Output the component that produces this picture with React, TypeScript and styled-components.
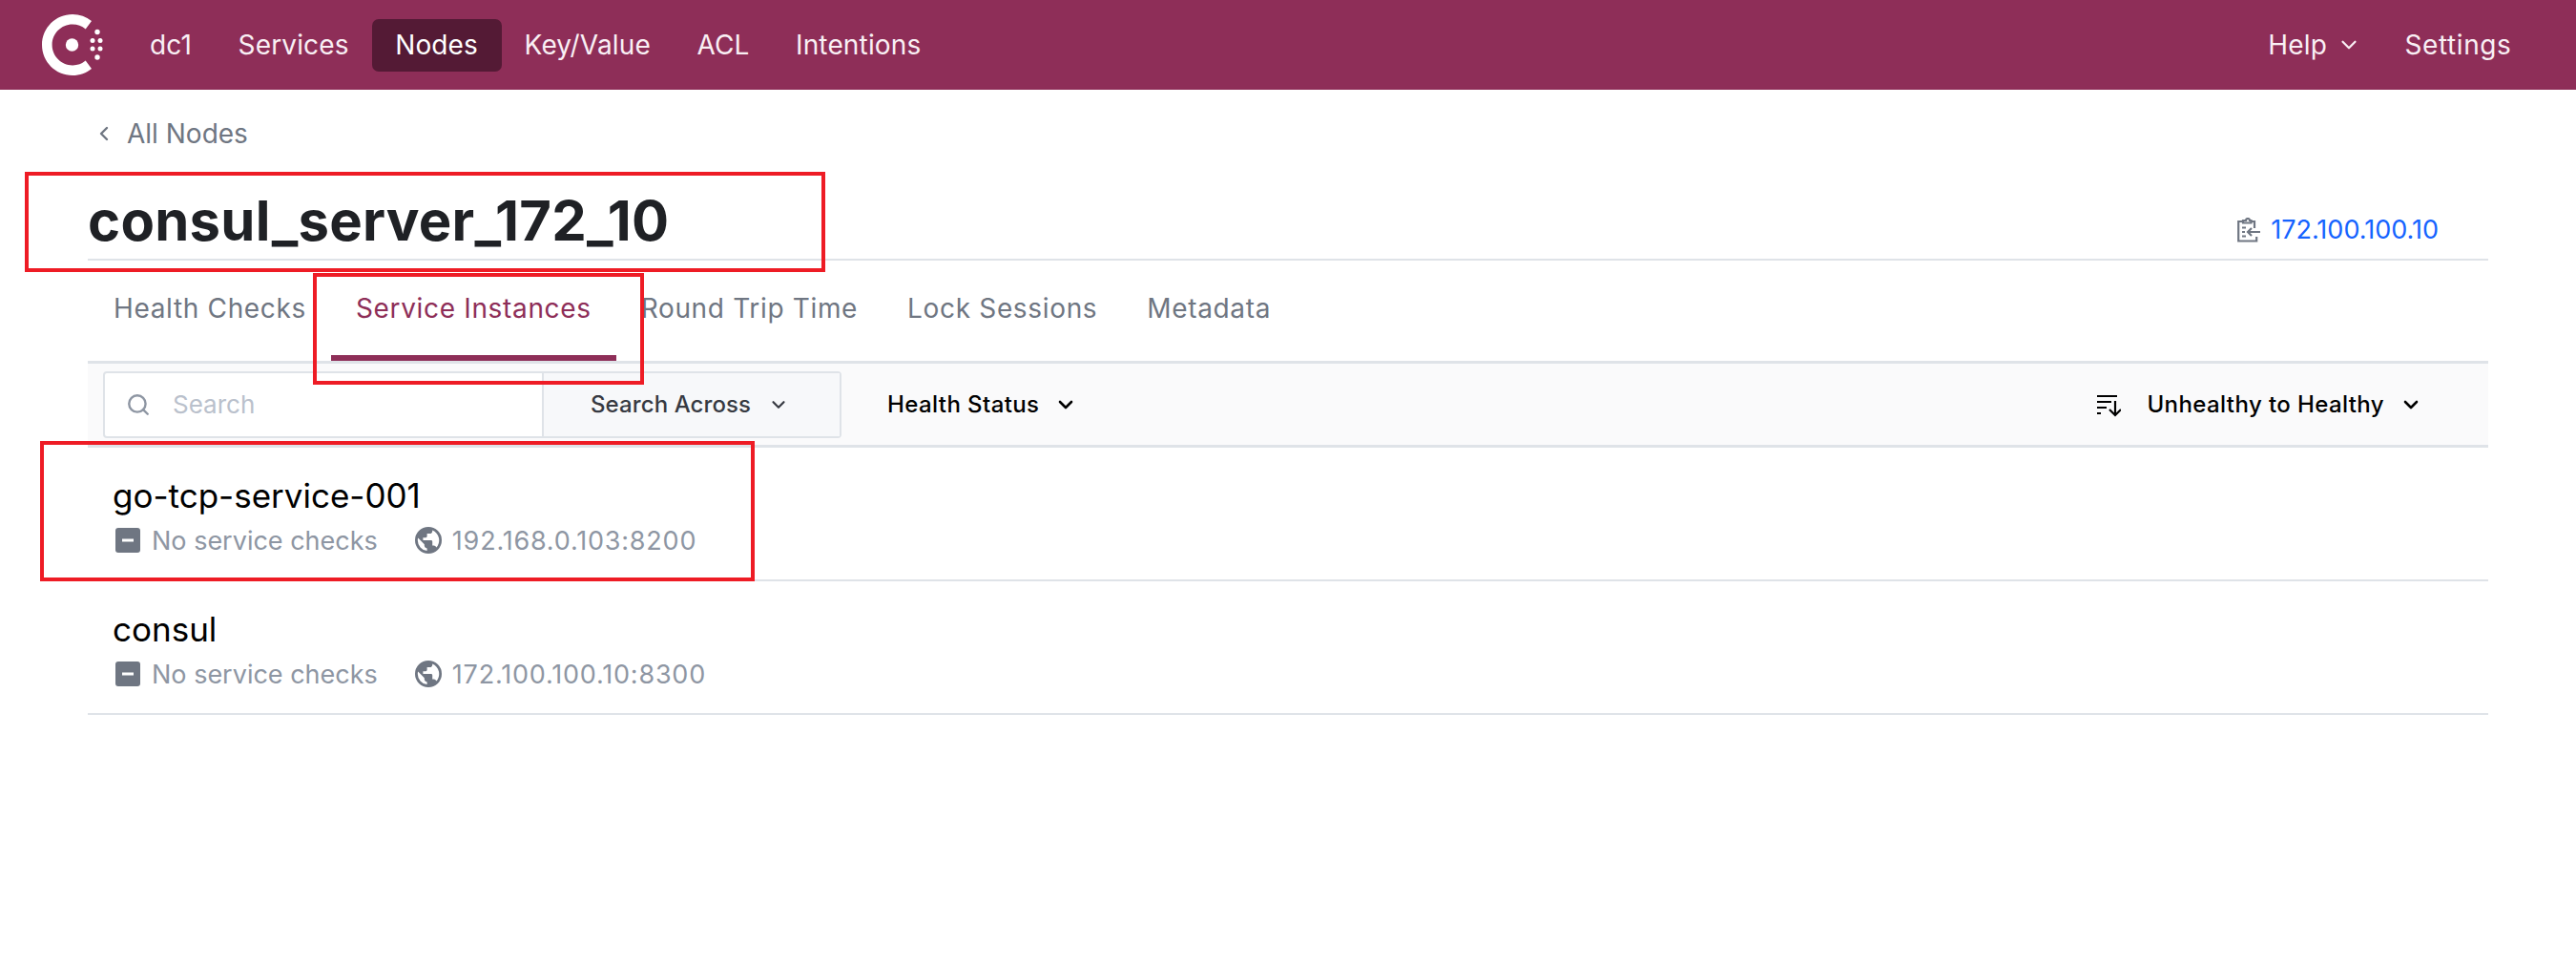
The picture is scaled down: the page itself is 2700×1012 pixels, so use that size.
import React from "react";
import styled, { createGlobalStyle } from "styled-components";
import { ChevronDown, ChevronLeft, Search as SearchGlyph } from "lucide-react";

const Global = createGlobalStyle`
  html, body { margin: 0; padding: 0; background: #fff; }
  body { font-family: Inter, "Liberation Sans", sans-serif; -webkit-font-smoothing: antialiased; }
  * { box-sizing: border-box; }
`;

const Page = styled.div`
  position: relative;
  width: 2700px;
  height: 1012px;
  overflow: hidden;
`;

const TopBar = styled.header`
  height: 94px;
  background: #8e2e58;
  display: flex;
  align-items: center;
  justify-content: space-between;
  padding: 0 43px 0 44px;
`;
const NavGroup = styled.nav`
  display: flex;
  align-items: center;
`;
const LogoMark = styled.svg`
  width: 64px;
  height: 64px;
  margin-right: 25px;
  display: block;
`;
const NavItem = styled.a<{ $active?: boolean; $spread?: number }>`
  height: 55px;
  padding: 0 24.5px 0 24px;
  display: flex;
  align-items: center;
  gap: 10px;
  border-radius: 7px;
  font-size: 28px;
  letter-spacing: ${p => p.$spread ?? 0.15}px;
  color: ${p => (p.$active ? "#fff" : "#f9eff4")};
  background: ${p => (p.$active ? "#541a35" : "transparent")};
`;
const MenuChevron = styled(ChevronDown)`
  margin-right: -3px;
`;

const Main = styled.main`
  padding: 0 92px;
`;
const Crumb = styled.div`
  height: 92px;
  display: flex;
  align-items: center;
  gap: 12px;
  font-size: 28px;
  color: #6f7682;
  padding: 0 0 0 5px;
`;
const TitleRow = styled.div`
  height: 87px;
  display: flex;
  align-items: flex-start;
  justify-content: space-between;
  border-bottom: 2px solid #dfe3e8;
`;
const Title = styled.h1`
  margin: 0;
  font-size: 58px;
  line-height: 60px;
  font-weight: 700;
  letter-spacing: 0.25px;
  color: #1f2125;
  margin-top: 15px;
`;
const Address = styled.div`
  display: flex;
  align-items: center;
  gap: 10px;
  font-size: 27px;
  color: #1563ff;
  padding: 38px 52px 0 0;
`;

const Tabs = styled.div`
  height: 108px;
  display: flex;
  padding-left: 1px;
  border-bottom: 3px solid #dfe3e8;
`;
const Tab = styled.a<{ $active?: boolean }>`
  height: 105px;
  padding: 0 26px 0;
  display: flex;
  align-items: center;
  font-size: 28px;
  letter-spacing: 0.66px;
  color: ${p => (p.$active ? "#8e2e58" : "#6f7682")};
  border-bottom: ${p => (p.$active ? "6px solid #8e2e58" : "6px solid transparent")};
`;

const Toolbar = styled.div`
  height: 88px;
  background: #fafafb;
  border-bottom: 3px solid #dfe3e8;
  display: flex;
  align-items: center;
  justify-content: space-between;
  padding: 0 69px 0 16px;
`;
const ToolGroup = styled.div`
  display: flex;
  align-items: center;
`;
const SearchBox = styled.div`
  width: 774px;
  height: 70px;
  border: 2px solid #dfe3e8;
  border-radius: 4px;
  display: flex;
  background: #fff;
  margin-right: 48px;
`;
const SearchField = styled.div`
  width: 460px;
  display: flex;
  align-items: center;
  gap: 23px;
  padding-left: 22px;
  font-size: 26px;
  color: #bac1cc;
  border-right: 2px solid #dfe3e8;
`;
const SearchScope = styled.div`
  flex: 1;
  background: #f7f8fa;
  display: flex;
  align-items: center;
  gap: 18px;
  padding-left: 49px;
  font-size: 24px;
  font-weight: 500;
  letter-spacing: 0.1px;
  color: #373a42;
`;
const FilterLabel = styled.div`
  display: flex;
  align-items: center;
  gap: 16px;
  font-size: 24px;
  font-weight: 500;
  letter-spacing: 0.4px;
  color: #000;
`;
const SortIcon = styled.svg`
  width: 26px;
  height: 26px;
  margin-right: 27px;
`;

const Row = styled.div`
  height: 140px;
  border-bottom: 2px solid #dfe3e8;
  padding: 28px 0 0 26px;
`;
const RowTitle = styled.div`
  font-size: 35px;
  line-height: 44px;
  color: #000;
`;
const RowMeta = styled.div`
  display: flex;
  align-items: center;
  height: 40px;
  margin-top: 5px;
  padding-left: 3px;
  font-size: 27px;
  color: #8e96a3;
`;
const MetaIcon = styled.svg<{ $gap: number; $after: number }>`
  width: ${p => p.$gap}px;
  height: ${p => p.$gap}px;
  margin-right: ${p => p.$after}px;
  flex: none;
`;
const MetaText = styled.span`
  margin-right: 39px;
`;
const MetaAddress = styled.span`
  letter-spacing: 0.8px;
`;

const Callout = styled.div<{ $x: number; $y: number; $w: number; $h: number }>`
  position: absolute;
  left: ${p => p.$x}px;
  top: ${p => p.$y}px;
  width: ${p => p.$w}px;
  height: ${p => p.$h}px;
  border: 4px solid #ee1c25;
`;

const Logo = () => (
  <LogoMark viewBox="0 0 64 64">
    <path
      d="M32 0C14.3 0 0 14.3 0 32s14.3 32 32 32c7.6 0 14.6-2.6 20-7.1l-6.3-8.4A21 21 0 0 1 32 53.4C20.2 53.4 10.6 43.8 10.6 32S20.2 10.6 32 10.6c5.2 0 9.9 1.9 13.7 4.9L52 7.100A31.700 31.700 0 0 0 32 0z"
      fill="#fff"
    />
    <circle cx="31.500" cy="32" r="6.700" fill="#fff" />
    <circle cx="58" cy="18.500" r="2.700" fill="#fff" />
    <circle cx="53" cy="27.500" r="2.500" fill="#fff" />
    <circle cx="61" cy="27.500" r="2.500" fill="#fff" />
    <circle cx="53" cy="36" r="2.500" fill="#fff" />
    <circle cx="61" cy="36" r="2.500" fill="#fff" />
    <circle cx="58" cy="45" r="2.700" fill="#fff" />
  </LogoMark>
);

const ClipboardIcon = () => (
  <svg width="26" height="26" viewBox="0 0 26 26" fill="none" stroke="#6f7682" strokeWidth="2.200">
    <path d="M7 4H2.200v20.500h19V20M19 11V4h-4" />
    <path d="M7 5.500V3h3a2 2 0 0 1 4 0h1.500v2.500z" />
    <path d="M6 10.500h4M6 15h3M6 19.500h4M12 15h13M16 11l-4 4 4 4" />
  </svg>
);

const NoChecks = () => (
  <MetaIcon $gap={26} $after={12} viewBox="0 0 26 26">
    <rect width="26" height="26" rx="3" fill="#6f7682" />
    <rect x="7" y="11.500" width="12" height="3" fill="#fff" />
  </MetaIcon>
);

const Globe = () => (
  <MetaIcon $gap={28} $after={11} viewBox="0 0 24 24">
    <path
      fill="#6f7682"
      d="M12 0a12 12 0 1 0 0 24 12 12 0 0 0 0-24zM2.400 12c0-.7.1-1.500.3-2.200L8.400 15.600v1.200c0 1.300 1.100 2.400 2.400 2.400v2.300A9.600 9.600 0 0 1 2.400 12zm16.700 6.500a2.400 2.400 0 0 0-2.300-1.700h-1.200v-3.600c0-.7-.5-1.200-1.200-1.200H7.200V9.600h2.400c.7 0 1.200-.5 1.200-1.200V6h2.400a2.400 2.400 0 0 0 2.400-2.400v-.5a9.600 9.600 0 0 1 3.500 15.400z"
    />
  </MetaIcon>
);

const services = [
  { name: "go-tcp-service-001", addr: "192.168.0.103:8200" },
  { name: "consul", addr: "172.100.100.10:8300" },
];

export default function App() {
  return (
    <Page>
      <Global />
      <TopBar>
        <NavGroup>
          <Logo />
          <NavItem>dc1</NavItem>
          <NavItem>Services</NavItem>
          <NavItem $active>Nodes</NavItem>
          <NavItem>Key/Value</NavItem>
          <NavItem>ACL</NavItem>
          <NavItem>Intentions</NavItem>
        </NavGroup>
        <NavGroup>
          <NavItem>
            Help <MenuChevron size={26} strokeWidth={2} />
          </NavItem>
          <NavItem $spread={0.6}>Settings</NavItem>
        </NavGroup>
      </TopBar>
      <Main>
        <Crumb>
          <ChevronLeft size={24} strokeWidth={2.4} color="#6f7682" />
          All Nodes
        </Crumb>
        <TitleRow>
          <Title>consul_server_172_10</Title>
          <Address>
            <ClipboardIcon />
            172.100.100.10
          </Address>
        </TitleRow>
        <Tabs>
          <Tab>Health Checks</Tab>
          <Tab $active>Service Instances</Tab>
          <Tab>Round Trip Time</Tab>
          <Tab>Lock Sessions</Tab>
          <Tab>Metadata</Tab>
        </Tabs>
        <Toolbar>
          <ToolGroup>
            <SearchBox>
              <SearchField>
                <SearchGlyph size={26} color="#8e96a3" strokeWidth={2.2} />
                Search
              </SearchField>
              <SearchScope>
                Search Across <ChevronDown size={22} strokeWidth={2.4} />
              </SearchScope>
            </SearchBox>
            <FilterLabel>
              Health Status <ChevronDown size={24} strokeWidth={2.6} />
            </FilterLabel>
          </ToolGroup>
          <ToolGroup>
            <SortIcon viewBox="0 0 26 26" fill="none" stroke="#000" strokeWidth="2.200">
              <path d="M1 4h21M1 10h15M1 16h10M1 22h4M20 9v15M14 18l6 6 6-6" />
            </SortIcon>
            <FilterLabel>
              Unhealthy to Healthy <ChevronDown size={24} strokeWidth={2.6} />
            </FilterLabel>
          </ToolGroup>
        </Toolbar>
        {services.map(s => (
          <Row key={s.name}>
            <RowTitle>{s.name}</RowTitle>
            <RowMeta>
              <NoChecks />
              <MetaText>No service checks</MetaText>
              <Globe />
              <MetaAddress>{s.addr}</MetaAddress>
            </RowMeta>
          </Row>
        ))}
      </Main>
      <Callout $x={26} $y={180} $w={839} $h={105} />
      <Callout $x={328} $y={286} $w={347} $h={117} />
      <Callout $x={42} $y={462} $w={749} $h={147} />
    </Page>
  );
}
